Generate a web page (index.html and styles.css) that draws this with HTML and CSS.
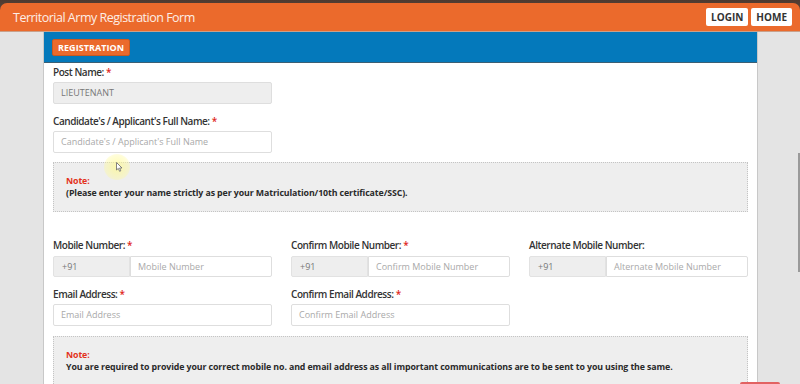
FILE: index.html
```html
<!DOCTYPE html>
<html lang="en">
<head>
<meta charset="utf-8">
<title>Territorial Army Registration Form</title>
<link rel="stylesheet" href="styles.css">
</head>
<body>
<div class="topstrip">
  <header class="header">
    <div class="title">Territorial Army Registration Form</div>
    <nav class="nav">
      <a class="navbtn">LOGIN</a>
      <a class="navbtn">HOME</a>
    </nav>
  </header>
</div>
<main class="panel">
  <div class="panel-head"><span class="badge">REGISTRATION</span></div>
  <div class="panel-body">
    <div class="grid">
      <div class="group g-post">
        <label class="lbl">Post Name: <span class="req">*</span></label>
        <div class="input readonly">LIEUTENANT</div>
      </div>
    </div>
    <div class="grid">
      <div class="group g-name">
        <label class="lbl">Candidate's / Applicant's Full Name: <span class="req">*</span></label>
        <div class="input ph">Candidate's / Applicant's Full Name</div>
      </div>
    </div>
    <div class="note note1">
      <div class="note-title">Note:</div>
      <div class="note-text">(Please enter your name strictly as per your Matriculation/10th certificate/SSC).</div>
    </div>
    <div class="grid">
      <div class="group">
        <label class="lbl">Mobile Number: <span class="req">*</span></label>
        <div class="igroup"><span class="addon">+91</span><div class="input ph">Mobile Number</div></div>
      </div>
      <div class="group">
        <label class="lbl">Confirm Mobile Number: <span class="req">*</span></label>
        <div class="igroup"><span class="addon">+91</span><div class="input ph">Confirm Mobile Number</div></div>
      </div>
      <div class="group">
        <label class="lbl">Alternate Mobile Number:</label>
        <div class="igroup"><span class="addon">+91</span><div class="input ph">Alternate Mobile Number</div></div>
      </div>
      <div class="group">
        <label class="lbl">Email Address: <span class="req">*</span></label>
        <div class="input ph">Email Address</div>
      </div>
      <div class="group">
        <label class="lbl">Confirm Email Address: <span class="req">*</span></label>
        <div class="input ph">Confirm Email Address</div>
      </div>
    </div>
    <div class="note note2">
      <div class="note-title">Note:</div>
      <div class="note-text">You are required to provide your correct mobile no. and email address as all important communications are to be sent to you using the same.</div>
    </div>
  </div>
</main>
<div class="cursor-glow"></div>
<svg class="cursor" width="7" height="10" viewBox="0 0 7 10" aria-hidden="true">
  <path d="M0.5 0.5 L0.5 8 L2.3 6.4 L3.6 9.3 L4.8 8.8 L3.6 6 L6 6 Z" fill="#fff" stroke="#666" stroke-width="0.8" stroke-linejoin="round"/>
</svg>
<div class="scroll-thumb"></div>
<div class="float-red"></div>
</body>
</html>
```

FILE: styles.css
```css
html, body {
  margin: 0;
  padding: 0;
}
body {
  background: #e4e4e4;
  font-family: "Open Sans", "Noto Sans", sans-serif;
  color: #333;
  height: 384px;
  overflow: hidden;
  position: relative;
}
.topstrip {
  background: linear-gradient(#4e3a30, #7a5a48);
  padding-top: 3px;
}
.header {
  height: 28px;
  background: #eb6a2c;
  border-radius: 7px 7px 0 0;
  border-bottom: 1px solid #c9a08a;
  display: flex;
  align-items: center;
  justify-content: space-between;
  padding: 0 8px 0 13px;
}
.title {
  color: #fdeee6;
  font-size: 12.5px;
  letter-spacing: -0.5px;
}
.nav {
  display: flex;
  gap: 3px;
  margin-top: -1px;
}
.navbtn {
  background: #fff;
  color: #333;
  font-weight: 700;
  font-size: 10px;
  height: 18px;
  line-height: 18px;
  padding: 0 5px;
  border-radius: 2px;
}
.panel {
  margin: 0 43px 0 43px;
  width: 713px;
  background: #fff;
  border-left: 1px solid #c8c8c8;
  border-right: 1px solid #c8c8c8;
  min-height: 360px;
}
.panel-head {
  background: #0479bb;
  height: 31px;
  border-bottom: 1px solid #3b5f74;
  padding: 7px 0 0 8px;
  box-sizing: border-box;
  display: flex;
  align-items: flex-start;
}
.badge {
  display: block;
  background: #eb6a2c;
  border: 1px solid #c85a22;
  color: #fff;
  font-weight: 700;
  font-size: 9px;
  letter-spacing: 0.05px;
  height: 17px;
  line-height: 15px;
  padding: 0 5px;
  box-sizing: border-box;
  border-radius: 2px;
}
.panel-body {
  padding: 2px 9px 0 9px;
}
.grid {
  display: grid;
  grid-template-columns: repeat(3, 219px);
  column-gap: 19px;
}
.group {
  margin-bottom: 10px;
}
.g-post {
  margin-bottom: 10px;
}
.g-name {
  margin-bottom: 9px;
}
.note1 + .grid .group:nth-child(-n+3) .input,
.note1 + .grid .group:nth-child(-n+3) .addon {
  margin-top: 1px;
  height: 21px;
}
.lbl {
  display: block;
  font-size: 10px;
  font-weight: 600;
  line-height: 14px;
  color: #333;
  margin-bottom: 3px;
  letter-spacing: -0.45px;
}
.req {
  color: #e0261b;
}
.input {
  height: 22px;
  box-sizing: border-box;
  border: 1px solid #dedede;
  border-radius: 2px;
  background: #fff;
  font-size: 9px;
  line-height: 20px;
  padding: 0 7px;
  color: #555;
  white-space: nowrap;
  overflow: hidden;
}
.readonly {
  background: #eeeeee;
  color: #777;
}
.ph {
  color: #a9a9a9;
}
.igroup {
  display: flex;
}
.addon {
  width: 77px;
  flex: none;
  height: 22px;
  box-sizing: border-box;
  background: #eeeeee;
  border: 1px solid #e2e2e2;
  border-radius: 2px 0 0 2px;
  font-size: 9px;
  line-height: 20px;
  padding: 0 8px;
  color: #777;
}
.igroup .input {
  flex: 1;
  border-radius: 0 2px 2px 0;
}
.note {
  background: #eeeeee;
  border: 1px dotted #c4c4c4;
  padding: 12px 12px;
  font-size: 8.8px;
  font-weight: 700;
  line-height: 12px;
  letter-spacing: -0.1px;
}
.note1 {
  margin-bottom: 26px;
}
.note-title {
  color: #e3321c;
}
.note-text {
  color: #2a2a2a;
}
.cursor-glow {
  position: absolute;
  left: 104px;
  top: 154px;
  width: 26px;
  height: 26px;
  border-radius: 50%;
  background: radial-gradient(circle, rgba(255, 250, 140, 0.7) 0%, rgba(255, 250, 150, 0.4) 60%, rgba(255, 250, 160, 0) 100%);
}
.cursor {
  position: absolute;
  left: 116px;
  top: 162px;
}
.scroll-thumb {
  position: absolute;
  right: 0;
  top: 153px;
  width: 2px;
  height: 119px;
  background: #9a9a9a;
}
.float-red {
  position: absolute;
  left: 740px;
  top: 382px;
  width: 40px;
  height: 4px;
  background: #e26262;
  border-radius: 2px 2px 0 0;
}
```
